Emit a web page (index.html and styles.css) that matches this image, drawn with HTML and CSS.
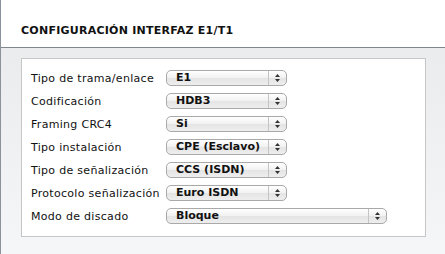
FILE: index.html
```html
<!DOCTYPE html>
<html lang="es">
<head>
    <meta charset="UTF-8">
    <title>Configuración interfaz E1/T1</title>
    <link rel="stylesheet" href="styles.css">
</head>
<body>
    <div class="header">
        <h1>CONFIGURACIÓN INTERFAZ E1/T1</h1>
    </div>
    <div class="content">
        <div class="panel">
            <div class="row">
                <span class="label">Tipo de trama/enlace</span>
                <div class="select"><span class="value">E1</span><span class="arrows"><svg width="5" height="8" viewBox="0 0 5 8"><path d="M0 3 L2.5 0 L5 3 Z M0 5 L2.5 8 L5 5 Z" fill="#333"/></svg></span></div>
            </div>
            <div class="row">
                <span class="label">Codificación</span>
                <div class="select"><span class="value">HDB3</span><span class="arrows"><svg width="5" height="8" viewBox="0 0 5 8"><path d="M0 3 L2.5 0 L5 3 Z M0 5 L2.5 8 L5 5 Z" fill="#333"/></svg></span></div>
            </div>
            <div class="row">
                <span class="label">Framing CRC4</span>
                <div class="select"><span class="value">Si</span><span class="arrows"><svg width="5" height="8" viewBox="0 0 5 8"><path d="M0 3 L2.5 0 L5 3 Z M0 5 L2.5 8 L5 5 Z" fill="#333"/></svg></span></div>
            </div>
            <div class="row">
                <span class="label">Tipo instalación</span>
                <div class="select"><span class="value">CPE (Esclavo)</span><span class="arrows"><svg width="5" height="8" viewBox="0 0 5 8"><path d="M0 3 L2.5 0 L5 3 Z M0 5 L2.5 8 L5 5 Z" fill="#333"/></svg></span></div>
            </div>
            <div class="row">
                <span class="label">Tipo de señalización</span>
                <div class="select"><span class="value">CCS (ISDN)</span><span class="arrows"><svg width="5" height="8" viewBox="0 0 5 8"><path d="M0 3 L2.5 0 L5 3 Z M0 5 L2.5 8 L5 5 Z" fill="#333"/></svg></span></div>
            </div>
            <div class="row">
                <span class="label">Protocolo señalización</span>
                <div class="select"><span class="value">Euro ISDN</span><span class="arrows"><svg width="5" height="8" viewBox="0 0 5 8"><path d="M0 3 L2.5 0 L5 3 Z M0 5 L2.5 8 L5 5 Z" fill="#333"/></svg></span></div>
            </div>
            <div class="row">
                <span class="label">Modo de discado</span>
                <div class="select wide"><span class="value">Bloque</span><span class="arrows"><svg width="5" height="8" viewBox="0 0 5 8"><path d="M0 3 L2.5 0 L5 3 Z M0 5 L2.5 8 L5 5 Z" fill="#333"/></svg></span></div>
            </div>
        </div>
    </div>
</body>
</html>
```
FILE: styles.css
```css
html, body {
    height: 100%;
}
body {
    margin: 0;
    font-family: 'DejaVu Sans', Verdana, sans-serif;
    color: #111;
    border-left: 1px solid #8a939c;
    background: linear-gradient(#e8e9eb, #f5f6f8);
    box-sizing: border-box;
}
.header {
    height: 48px;
    background-color: #fff;
    border-bottom: 1px solid #7e868e;
    box-sizing: border-box;
    padding: 25px 0 0 20px;
}
h1 {
    margin: 0;
    font-size: 11px;
    font-weight: bold;
    letter-spacing: 0.25px;
    line-height: 12px;
    color: #111;
}
.content {
    padding: 10px 0 0 20px;
}
.panel {
    width: 405px;
    height: 179px;
    box-sizing: border-box;
    background-color: #fff;
    border: 1px solid #c6c6c6;
    padding: 11px 9px 0 9px;
}
.row {
    display: flex;
    align-items: center;
    height: 16px;
    margin-bottom: 7px;
}
.label {
    width: 135px;
    flex: none;
    white-space: nowrap;
    font-size: 11px;
    letter-spacing: 0.3px;
}
.select {
    display: flex;
    width: 121px;
    height: 16px;
    box-sizing: border-box;
    border: 1px solid #a9a9a9;
    border-radius: 5px;
    background: linear-gradient(#ffffff, #f1f1f1 50%, #e4e4e4 51%, #eeeeee);
    font-size: 11px;
    font-weight: bold;
    line-height: 14px;
}
.select.wide {
    width: 221px;
}
.value {
    flex: 1;
    padding-left: 9px;
}
.arrows {
    width: 17px;
    border-left: 1px solid #c4c4c4;
    display: flex;
    align-items: center;
    justify-content: center;
}
```
